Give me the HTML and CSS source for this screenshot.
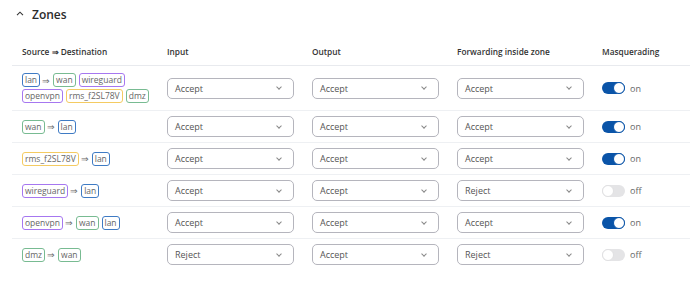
FILE: index.html
```html
<!DOCTYPE html>
<html>

<head>
  <meta charset="utf-8">
  <meta name="viewport" content="width=device-width, initial-scale=1">
  <title>Zones</title>
  <link rel="stylesheet" href="styles.css">
</head>

<body>
	<div class="section-title">
		<svg class="chevron-up" width="8" height="5" viewBox="0 0 8 5">
			<path d="M1 4.2 L4 1.2 L7 4.2" fill="none" stroke="#333" stroke-width="1.1"/>
		</svg>
		<span>Zones</span>
	</div>

	<div class="zones">
		<div class="row head">
			<div class="cell">Source &rArr; Destination</div>
			<div class="cell">Input</div>
			<div class="cell">Output</div>
			<div class="cell">Forwarding inside zone</div>
			<div class="cell">Masquerading</div>
		</div>

		<div class="row tall">
			<div class="cell">
				<div class="tags">
					<span class="tag lan">lan</span><span class="arrow">&rArr;</span><span class="tag wan">wan</span><span class="tag wireguard">wireguard</span>
					<span class="tag openvpn">openvpn</span><span class="tag rms">rms_f2SL78V</span><span class="tag dmz">dmz</span>
				</div>
			</div>
			<div class="cell"><div class="select"><span>Accept</span><i class="caret"></i></div></div>
			<div class="cell"><div class="select"><span>Accept</span><i class="caret"></i></div></div>
			<div class="cell"><div class="select"><span>Accept</span><i class="caret"></i></div></div>
			<div class="cell"><div class="switch on"><b></b></div><span class="state">on</span></div>
		</div>

		<div class="row">
			<div class="cell">
				<div class="tags"><span class="tag wan">wan</span><span class="arrow">&rArr;</span><span class="tag lan">lan</span></div>
			</div>
			<div class="cell"><div class="select"><span>Accept</span><i class="caret"></i></div></div>
			<div class="cell"><div class="select"><span>Accept</span><i class="caret"></i></div></div>
			<div class="cell"><div class="select"><span>Accept</span><i class="caret"></i></div></div>
			<div class="cell"><div class="switch on"><b></b></div><span class="state">on</span></div>
		</div>

		<div class="row">
			<div class="cell">
				<div class="tags"><span class="tag rms">rms_f2SL78V</span><span class="arrow">&rArr;</span><span class="tag lan">lan</span></div>
			</div>
			<div class="cell"><div class="select"><span>Accept</span><i class="caret"></i></div></div>
			<div class="cell"><div class="select"><span>Accept</span><i class="caret"></i></div></div>
			<div class="cell"><div class="select"><span>Accept</span><i class="caret"></i></div></div>
			<div class="cell"><div class="switch on"><b></b></div><span class="state">on</span></div>
		</div>

		<div class="row">
			<div class="cell">
				<div class="tags"><span class="tag wireguard">wireguard</span><span class="arrow">&rArr;</span><span class="tag lan">lan</span></div>
			</div>
			<div class="cell"><div class="select"><span>Accept</span><i class="caret"></i></div></div>
			<div class="cell"><div class="select"><span>Accept</span><i class="caret"></i></div></div>
			<div class="cell"><div class="select"><span>Reject</span><i class="caret"></i></div></div>
			<div class="cell"><div class="switch"><b></b></div><span class="state">off</span></div>
		</div>

		<div class="row">
			<div class="cell">
				<div class="tags"><span class="tag openvpn">openvpn</span><span class="arrow">&rArr;</span><span class="tag wan">wan</span><span class="tag lan">lan</span></div>
			</div>
			<div class="cell"><div class="select"><span>Accept</span><i class="caret"></i></div></div>
			<div class="cell"><div class="select"><span>Accept</span><i class="caret"></i></div></div>
			<div class="cell"><div class="select"><span>Accept</span><i class="caret"></i></div></div>
			<div class="cell"><div class="switch on"><b></b></div><span class="state">on</span></div>
		</div>

		<div class="row last">
			<div class="cell">
				<div class="tags"><span class="tag dmz">dmz</span><span class="arrow">&rArr;</span><span class="tag wan">wan</span></div>
			</div>
			<div class="cell"><div class="select"><span>Reject</span><i class="caret"></i></div></div>
			<div class="cell"><div class="select"><span>Accept</span><i class="caret"></i></div></div>
			<div class="cell"><div class="select"><span>Reject</span><i class="caret"></i></div></div>
			<div class="cell"><div class="switch"><b></b></div><span class="state">off</span></div>
		</div>
	</div>
</body>

</html>
```

FILE: styles.css
```css
body {
	margin: 0;
	background: #fff;
	font-family: "Open Sans", "Noto Sans", sans-serif;
	color: #333;
}

.section-title {
	height: 28px;
	display: flex;
	align-items: center;
	padding-left: 16px;
	font-size: 12px;
	font-weight: 600;
	color: #2b2b2b;
}

.chevron-up {
	margin-right: 8px;
	margin-top: -2px;
}

.zones {
	margin: 9px 0 0 12px;
}

.row {
	display: grid;
	grid-template-columns: 145px 145px 145px 145px 1fr;
	align-items: center;
	height: 31px;
	border-bottom: 1px solid #eef0f3;
}

.row.head {
	height: 28px;
	font-size: 8.3px;
	font-weight: 600;
	color: #333;
	border-bottom-color: #e8eaee;
}

.row.tall {
	height: 44px;
}

.row.last {
	border-bottom: none;
}

.cell {
	padding-left: 10px;
	display: flex;
	align-items: center;
}

.tags {
	display: flex;
	flex-wrap: wrap;
	align-items: center;
	gap: 2px 3px;
}

.tag {
	display: inline-block;
	height: 14px;
	line-height: 12px;
	padding: 0 2px;
	border: 1px solid #999;
	border-radius: 3px;
	font-size: 8.5px;
	color: #666;
	box-sizing: border-box;
}

.tag.lan { border-color: #3f7bc4; }
.tag.wan { border-color: #78bb92; }
.tag.dmz { border-color: #78bb92; }
.tag.wireguard { border-color: #a677f0; }
.tag.openvpn { border-color: #a677f0; }
.tag.rms { border-color: #f4cb62; }

.arrow {
	font-size: 9px;
	color: #666;
	margin: 0 0 0 -1px;
}

.select {
	width: 127px;
	height: 21px;
	box-sizing: border-box;
	border: 1px solid #b5b5bd;
	border-radius: 5px;
	display: flex;
	align-items: center;
	justify-content: space-between;
	padding: 0 12px 0 7px;
	font-size: 9px;
	color: #555;
}

.caret {
	width: 3px;
	height: 3px;
	border-right: 1px solid #888;
	border-bottom: 1px solid #888;
	transform: rotate(45deg);
	margin-top: -2px;
}

.switch {
	width: 23px;
	height: 12px;
	border-radius: 6px;
	background: #e4e4e6;
	display: flex;
	align-items: center;
	justify-content: flex-start;
}

.switch b {
	width: 12px;
	height: 12px;
	box-sizing: border-box;
	border-radius: 50%;
	background: #fff;
	border: 1px solid #e0e0e2;
}

.switch.on {
	background: #0a54a8;
	justify-content: flex-end;
}

.switch.on b {
	border: 1.5px solid #0a54a8;
}

.state {
	font-size: 9px;
	color: #666;
	margin-left: 5px;
}
```
